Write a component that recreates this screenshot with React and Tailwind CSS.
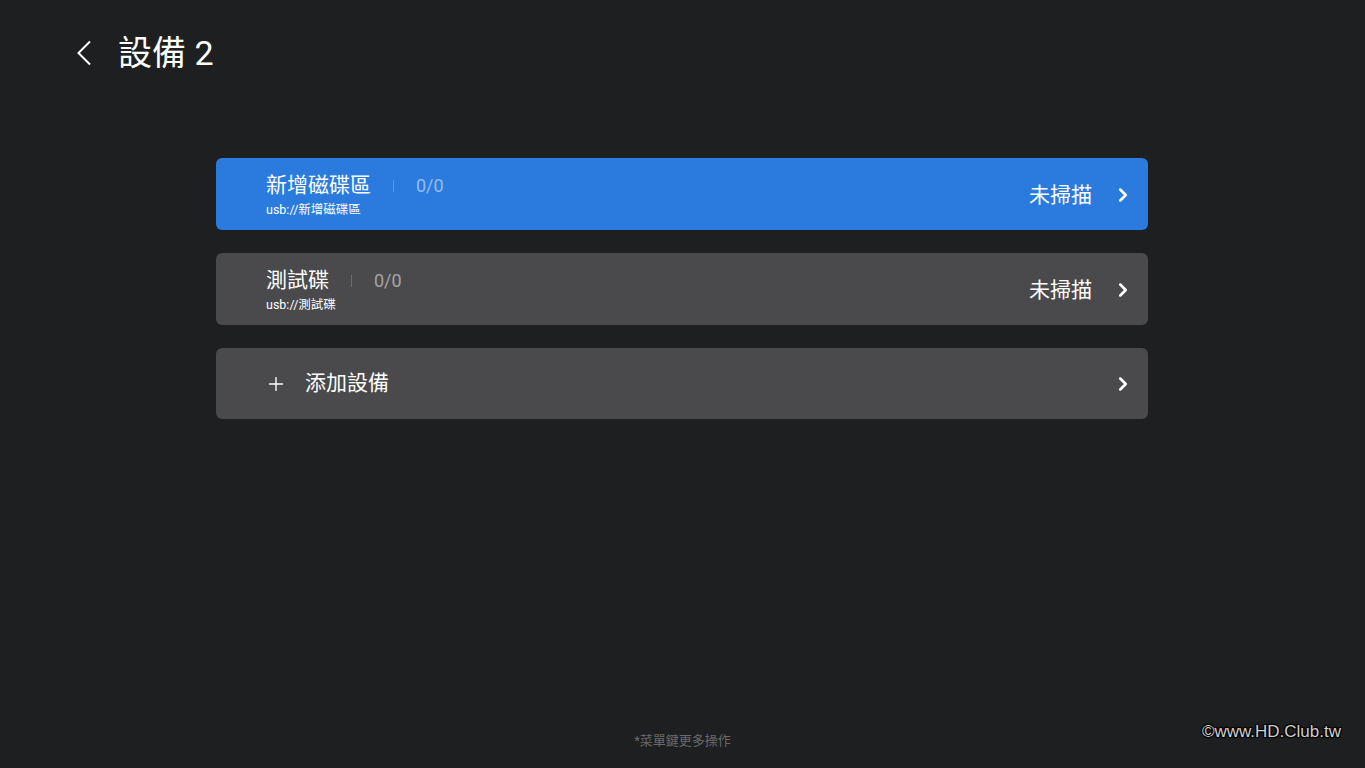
import { ChevronRight, Plus } from "lucide-react";

const font = { fontFamily: '"Roboto", "Noto Sans CJK TC", sans-serif' };

const devices = [
  { name: "新增磁碟區", path: "usb://新增磁碟區", count: "0/0", status: "未掃描", active: true },
  { name: "測試碟", path: "usb://測試碟", count: "0/0", status: "未掃描", active: false },
];

function DeviceRow({ device }) {
  return (
    <div
      className={`flex items-center h-[72px] rounded-[6px] pl-[50px] pr-[14px] ${
        device.active ? "bg-[#2a7bdd]" : "bg-[#4a4a4c]"
      }`}
    >
      <div className="flex flex-col">
        <div className="flex items-center h-[26px] mt-[1px]">
          <span className="text-[21px] text-white leading-none">{device.name}</span>
          <span className="w-px h-[12px] bg-white/20 ml-[22px]" />
          <span className="text-[18px] text-white/50 ml-[22px] leading-none">{device.count}</span>
        </div>
        <span className="text-[12.5px] text-white leading-none mt-[5px]">{device.path}</span>
      </div>
      <span className="ml-auto text-[21px] text-white leading-none mt-[2px]">{device.status}</span>
      <ChevronRight className="w-[22px] h-[22px] text-white ml-[20px] mt-[1px]" strokeWidth={2.8} />
    </div>
  );
}

export default function App() {
  return (
    <div className="relative w-[1365px] h-[768px] bg-[#1e1f21] overflow-hidden" style={font}>
      {/* Header */}
      <div className="flex items-center h-[34px] mt-[36px] pl-[76px]">
        <svg width="16" height="26" viewBox="0 0 16 26" className="text-white">
          <polyline points="14,1.5 2.5,13 14,24.5" fill="none" stroke="currentColor" strokeWidth="2" />
        </svg>
        <span className="text-[34px] text-white ml-[26px] leading-none">設備 2</span>
      </div>

      {/* Device list */}
      <div className="flex flex-col gap-[23px] mx-[216px] w-[932px] mt-[88px]">
        {devices.map((d) => (
          <DeviceRow key={d.name} device={d} />
        ))}
        <div className="flex items-center h-[71px] rounded-[6px] bg-[#4a4a4c] pl-[49px] pr-[14px]">
          <Plus className="w-[22px] h-[22px] text-white" strokeWidth={1.5} />
          <span className="text-[21px] text-white ml-[18px] leading-none">添加設備</span>
          <ChevronRight className="w-[22px] h-[22px] text-white ml-auto" strokeWidth={2.8} />
        </div>
      </div>

      {/* Footer hint */}
      <div className="absolute left-0 right-0 bottom-[18px] text-center text-[13px] text-[#6a6a6a]">
        *菜單鍵更多操作
      </div>

      {/* Watermark */}
      <div
        className="absolute right-[24px] bottom-[24px] text-[17px] text-[#cfcfcf]"
        style={{
          fontFamily: '"Liberation Sans", sans-serif',
          textShadow: "1px 1px 1px #000, -1px -1px 1px #000, 1px -1px 1px #000, -1px 1px 1px #000",
        }}
      >
        ©www.HD.Club.tw
      </div>
    </div>
  );
}
